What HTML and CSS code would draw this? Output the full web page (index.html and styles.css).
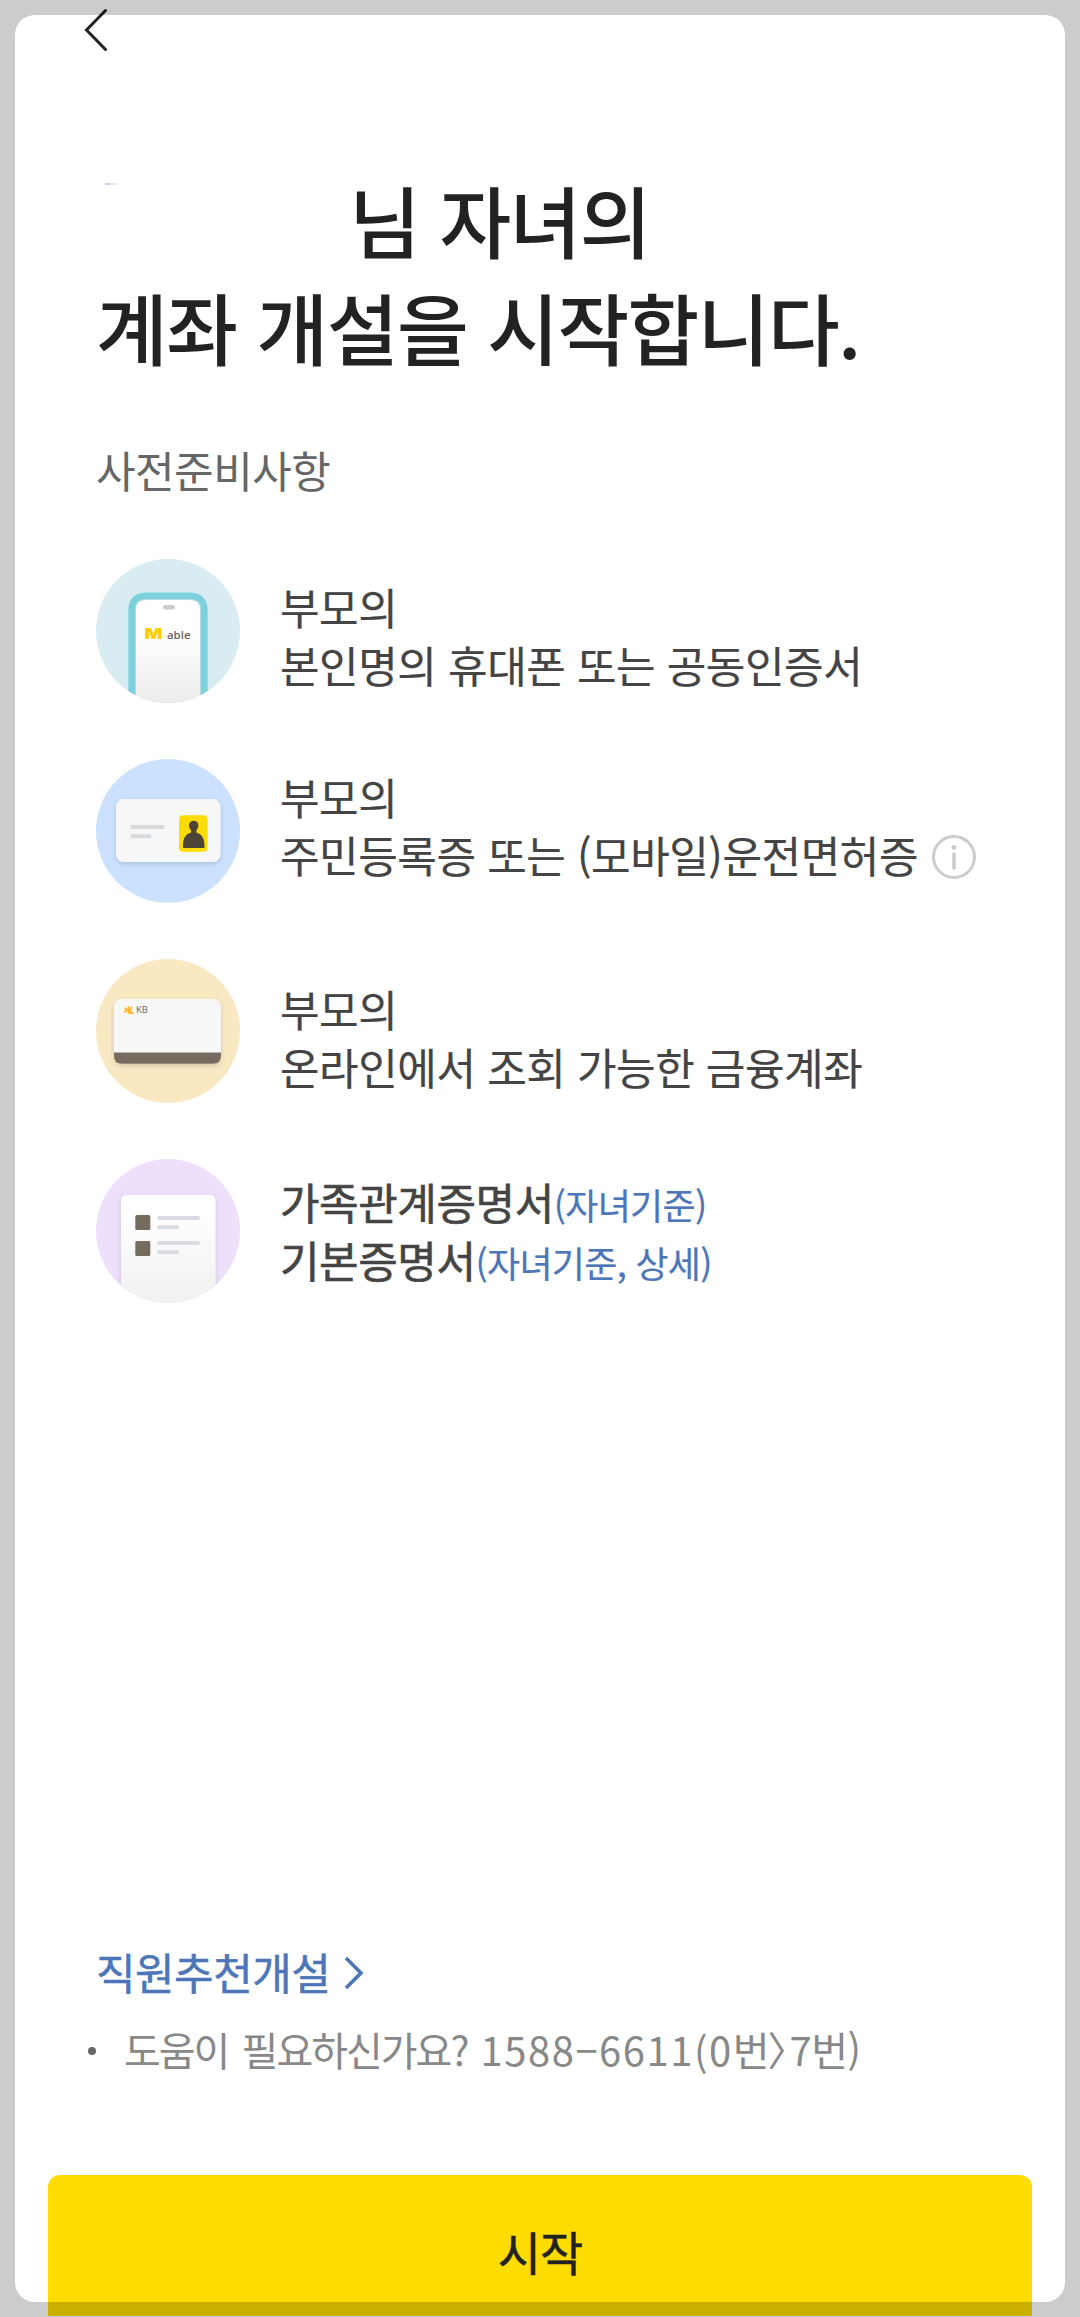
FILE: index.html
```html
<!DOCTYPE html>
<html lang="ko">
<head>
<meta charset="utf-8">
<title>계좌 개설</title>
<link rel="stylesheet" href="styles.css">
</head>
<body>
<div class="screen">
  <header class="topbar">
    <svg class="back" viewBox="0 0 26 44" width="26" height="44"><path d="M22.500 2.500 3.500 22 22.500 41.500" fill="none" stroke="#222" stroke-width="3" stroke-linecap="round" stroke-linejoin="miter"/></svg>
  </header>
  <main class="content">
    <h1 class="title"><span class="name"><i class="trace"></i></span>님 자녀의<br>계좌 개설을 시작합니다.</h1>
    <p class="subtitle">사전준비사항</p>
    <ul class="list">
      <li class="item">
        <svg class="icon" viewBox="0 0 144 144">
          <defs>
            <clipPath id="disc"><circle cx="72" cy="72" r="72"/></clipPath>
            <linearGradient id="paper" x1="0" y1="0" x2="0" y2="1"><stop offset="0.350" stop-color="#fff"/><stop offset="1" stop-color="#ebebeb"/></linearGradient>
            <linearGradient id="sheet" x1="0" y1="0" x2="0" y2="1"><stop offset="0.150" stop-color="#fff"/><stop offset="0.850" stop-color="#f2f2f2"/></linearGradient>
            <filter id="shade" x="-20%" y="-20%" width="140%" height="150%"><feDropShadow dx="0" dy="2" stdDeviation="2.500" flood-color="#000" flood-opacity="0.150"/></filter>
          </defs>
          <circle cx="72" cy="72" r="72" fill="#d8ecf1"/>
          <g clip-path="url(#disc)">
            <path d="M32.300 136V52q0-18.500 18.500-18.500h42.400q18.500 0 18.500 18.500V136z" fill="#7dd1dc"/>
            <path d="M39 144V51q0-11 11-11h44q11 0 11 11V144z" fill="#b9dbe0"/>
            <path d="M40 144V51q0-10 10-10h44q10 0 10 10V144z" fill="url(#paper)"/>
            <rect x="67" y="46" width="12" height="4.500" rx="2" fill="#ccc"/>
          </g>
          <text class="logo-m" x="48.500" y="80" textLength="18" lengthAdjust="spacingAndGlyphs">M</text>
          <circle cx="69" cy="77" r="0.700" fill="#ffd200"/>
          <text class="logo-able" x="71" y="80.300" textLength="23.500" lengthAdjust="spacingAndGlyphs">able</text>
        </svg>
        <p class="text text-phone">부모의<br>본인명의 휴대폰 또는 공동인증서</p>
      </li>
      <li class="item">
        <svg class="icon" viewBox="0 0 144 144">
          <circle cx="72" cy="72" r="72" fill="#cbe1fe"/>
          <rect x="20" y="40" width="104.500" height="63" rx="8" fill="#f7f7f7" filter="url(#shade)"/>
          <path d="M34.700 66h33.600v4H34.700zM34.700 75.300h20.500v4H34.700z" fill="#d8dbde"/>
          <rect x="83" y="56.300" width="28.500" height="36.500" rx="4" fill="#ffdc00"/>
          <path d="M87 89v-3c0-7 3-11 8-12.500v-2.200c-4-4.500-1.500-9.500 2.700-9.500s6.700 5 2.700 9.500v2.200c5 1.500 8 5.500 8 12.500v3z" fill="#4b4436"/>
        </svg>
        <div class="text text-id">부모의<br><span class="line">주민등록증 또는 (모바일)운전면허증<svg class="info" viewBox="0 0 46 46" width="46" height="46"><circle cx="23" cy="23" r="20.500" fill="none" stroke="#ccc" stroke-width="3"/><circle cx="23" cy="13.500" r="2.400" fill="#ccc"/><path d="M23 20v14" stroke="#ccc" stroke-width="3.500" stroke-linecap="round"/></svg></span></div>
      </li>
      <li class="item">
        <svg class="icon" viewBox="0 0 144 144">
          <circle cx="72" cy="72" r="72" fill="#f8e9c3"/>
          <rect x="18" y="40" width="107" height="64.800" rx="8" fill="#f7f7f7" filter="url(#shade)"/>
          <path d="M18 93.500h107v3.300q0 8-8 8H26q-8 0-8-8z" fill="#766b5f"/>
          <path d="M28.500 49l3.500 2.500M28 53l4-2M32.500 47v8M36 48l-3 4 4.500 2.500M35 51.500v3.500" fill="none" stroke="#fbb62d" stroke-width="1.700"/>
          <text class="logo-kb" x="40" y="54.300" textLength="12" lengthAdjust="spacingAndGlyphs">KB</text>
        </svg>
        <p class="text text-account">부모의<br>온라인에서 조회 가능한 금융계좌</p>
      </li>
      <li class="item">
        <svg class="icon" viewBox="0 0 144 144">
          <circle cx="72" cy="72" r="72" fill="#eee0fb"/>
          <g clip-path="url(#disc)">
            <path d="M25 150V42q0-6 6-6h82.500q6 0 6 6V150z" fill="url(#sheet)" filter="url(#shade)"/>
            <rect x="39.300" y="56" width="15" height="15" rx="1.500" fill="#766b5f"/>
            <rect x="39.300" y="82" width="15" height="15" rx="1.500" fill="#766b5f"/>
            <path d="M61.700 57h41.800v4H61.700zM61.700 66.300h21v4h-21zM61.700 82h41.800v4H61.700zM61.700 91.300h21v4h-21z" fill="#d8dbdf"/>
          </g>
        </svg>
        <p class="text text-docs"><b>가족관계증명서</b><span class="note">(자녀기준)</span><br><b>기본증명서</b><span class="note">(자녀기준, 상세)</span></p>
      </li>
    </ul>
    <a class="referral">직원추천개설<svg class="chevron" viewBox="0 0 22 36" width="22" height="36"><path d="M3 3 18 18 3 33" fill="none" stroke="#4c76b8" stroke-width="3.600"/></svg></a>
    <p class="help"><i class="bullet"></i>도움이 필요하신가요? <span class="tel">1588−6611(0</span>번<span class="angle">〉</span><span class="ext">7번)</span></p>
  </main>
  <button class="start">시작</button>
  <div class="frame"></div>
</div>
</body>
</html>
```
FILE: styles.css
```css
* {
  box-sizing: border-box;
  margin: 0;
  padding: 0;
}

body {
  background: #fff;
  font-family: "Noto Sans CJK KR", sans-serif;
  color: #444;
}

.screen {
  position: relative;
  display: flex;
  flex-direction: column;
  height: 2317px;
  overflow: hidden;
  background: #fff;
}

/* dimmed border around the rounded viewport */
.frame {
  position: absolute;
  inset: 15px;
  border-radius: 20px;
  box-shadow: 0 0 0 40px rgba(0, 0, 0, 0.2);
  pointer-events: none;
}

.topbar {
  height: 166px;
  padding: 8px 0 0 83px;
}

.back {
  display: block;
}

.content {
  display: flex;
  flex-direction: column;
  height: 2009px;
  padding-left: 96px;
}

.title {
  height: 225px;
  font-size: 78px;
  font-weight: 500;
  line-height: 107px;
  letter-spacing: -1.6px;
  color: #222;
  white-space: nowrap;
}

.name {
  display: inline-block;
  width: 253px;
  height: 70px;
}

.trace {
  display: block;
  width: 15px;
  height: 2px;
  margin-left: 9px;
  background: linear-gradient(90deg, #c5cfe0, #fff);
}

.subtitle {
  margin-top: 49px;
  font-size: 43px;
  line-height: 58px;
  letter-spacing: -0.5px;
  color: #666;
}

.list {
  display: flex;
  flex-direction: column;
  gap: 56px;
  margin-top: 61px;
  list-style: none;
}

.item {
  display: flex;
  gap: 40px;
  height: 144px;
}

.icon {
  flex: none;
  width: 144px;
  height: 144px;
}

.text {
  font-size: 43px;
  line-height: 57.5px;
  letter-spacing: -0.45px;
  white-space: nowrap;
  -webkit-text-stroke: 0.2px currentColor;
}

.text b {
  font-weight: 400;
  -webkit-text-stroke: 0.6px currentColor;
}

.text-phone { margin-top: 19px; }
.text-id { margin-top: 9px; }
.text-account { margin-top: 21px; }
.text-docs { margin-top: 14px; }

.line {
  display: flex;
  align-items: center;
  height: 58px;
}

.info {
  margin: 5px 0 0 13px;
}

.note {
  font-size: 36px;
  line-height: 1;
  letter-spacing: -0.7px;
  color: #4c76b8;
}

.logo-m {
  font: 900 14px "Inter", sans-serif;
  fill: #ffce00;
}

.logo-able {
  font: 600 10.5px "Open Sans", sans-serif;
  fill: #6d675f;
}

.logo-kb {
  font: 9px "Open Sans", sans-serif;
  fill: #666;
}

.referral {
  display: flex;
  align-items: center;
  gap: 13px;
  margin-top: auto;
  font-size: 43px;
  line-height: 58px;
  letter-spacing: -0.5px;
  color: #4c76b8;
  -webkit-text-stroke: 0.5px currentColor;
}

.chevron {
  margin-top: 4px;
}

.help {
  display: flex;
  align-items: center;
  height: 50px;
  margin: 24px 0 101px -8px;
  font-size: 40px;
  line-height: 50px;
  letter-spacing: -2px;
  word-spacing: 4px;
  color: #888;
  white-space: pre;
}

.bullet {
  width: 8px;
  height: 8px;
  margin: 4px 28px 0 0;
  border-radius: 50%;
  background: #666;
}

.tel {
  letter-spacing: 1.5px;
}

.angle {
  font-feature-settings: "halt";
  letter-spacing: 2px;
}

.ext {
  letter-spacing: -0.5px;
}

.start {
  flex: none;
  height: 141px;
  margin: 0 48px;
  padding-top: 9px;
  border: 0;
  border-radius: 12px 12px 0 0;
  background: #fedc00;
  font-family: inherit;
  font-size: 47px;
  letter-spacing: -1px;
  color: #222;
  -webkit-text-stroke: 0.5px currentColor;
}
```
